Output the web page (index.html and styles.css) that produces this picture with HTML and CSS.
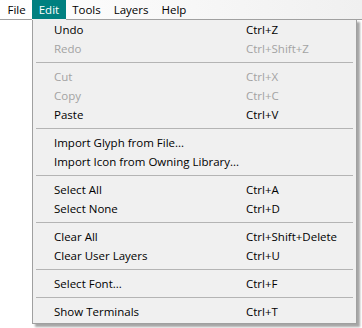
FILE: index.html
```html
<!DOCTYPE html>
<html lang="en">
  <head>
    <meta charset="UTF-8" />
    <title>Edit menu</title>
    <link rel="stylesheet" href="styles.css">
  </head>
  <body>
    <nav class="menubar">
      <span class="title">File</span>
      <span class="title open">Edit</span>
      <span class="title">Tools</span>
      <span class="title">Layers</span>
      <span class="title">Help</span>
    </nav>

    <div class="dropdown">
      <div class="item"><span>Undo</span><span>Ctrl+Z</span></div>
      <div class="item disabled"><span>Redo</span><span>Ctrl+Shift+Z</span></div>
      <div class="sep"></div>
      <div class="item disabled"><span>Cut</span><span>Ctrl+X</span></div>
      <div class="item disabled"><span>Copy</span><span>Ctrl+C</span></div>
      <div class="item"><span>Paste</span><span>Ctrl+V</span></div>
      <div class="sep"></div>
      <div class="item"><span>Import Glyph from File...</span><span></span></div>
      <div class="item"><span>Import Icon from Owning Library...</span><span></span></div>
      <div class="sep"></div>
      <div class="item"><span>Select All</span><span>Ctrl+A</span></div>
      <div class="item"><span>Select None</span><span>Ctrl+D</span></div>
      <div class="sep"></div>
      <div class="item"><span>Clear All</span><span>Ctrl+Shift+Delete</span></div>
      <div class="item"><span>Clear User Layers</span><span>Ctrl+U</span></div>
      <div class="sep"></div>
      <div class="item"><span>Select Font...</span><span>Ctrl+F</span></div>
      <div class="sep"></div>
      <div class="item"><span>Show Terminals</span><span>Ctrl+T</span></div>
    </div>
  </body>
</html>
```

FILE: styles.css
```css
* {
  margin: 0;
  padding: 0;
  box-sizing: border-box;
}
body {
  background: #fff;
  font-family: "Open Sans", "Noto Sans", sans-serif;
  font-size: 11.5px;
  color: #000;
}
.menubar {
  display: flex;
  height: 20px;
  padding-left: 1px;
  background: linear-gradient(to right, #fff, #f0f0f0);
  border-bottom: 1px solid #a0a0a0;
}
.menubar .title {
  position: relative;
  padding: 0 6.5px;
  line-height: 19px;
}
.menubar .open {
  background: #008080;
  color: #fff;
}
/* hides the dropdown's top border under the open title */
.menubar .open::after {
  content: "";
  position: absolute;
  left: 0;
  right: 0;
  bottom: -1px;
  height: 1px;
  background: #f0f0f0;
  z-index: 2;
}
.dropdown {
  position: absolute;
  top: 19px;
  left: 32px;
  width: 325px;
  padding: 0 0 2px;
  background: #f0f0f0;
  border: 1px solid #a0a0a0;
  box-shadow: 3px 3px 2px rgba(0, 0, 0, 0.35);
  z-index: 1;
}
.dropdown .item {
  display: grid;
  grid-template-columns: 192px auto;
  height: 19px;
  line-height: 19px;
  padding-left: 21px;
  white-space: nowrap;
}
.dropdown .disabled {
  color: #a3a3a3;
}
.dropdown .sep {
  height: 1px;
  margin: 4px 3px;
  background: #b4b4b4;
}
```
